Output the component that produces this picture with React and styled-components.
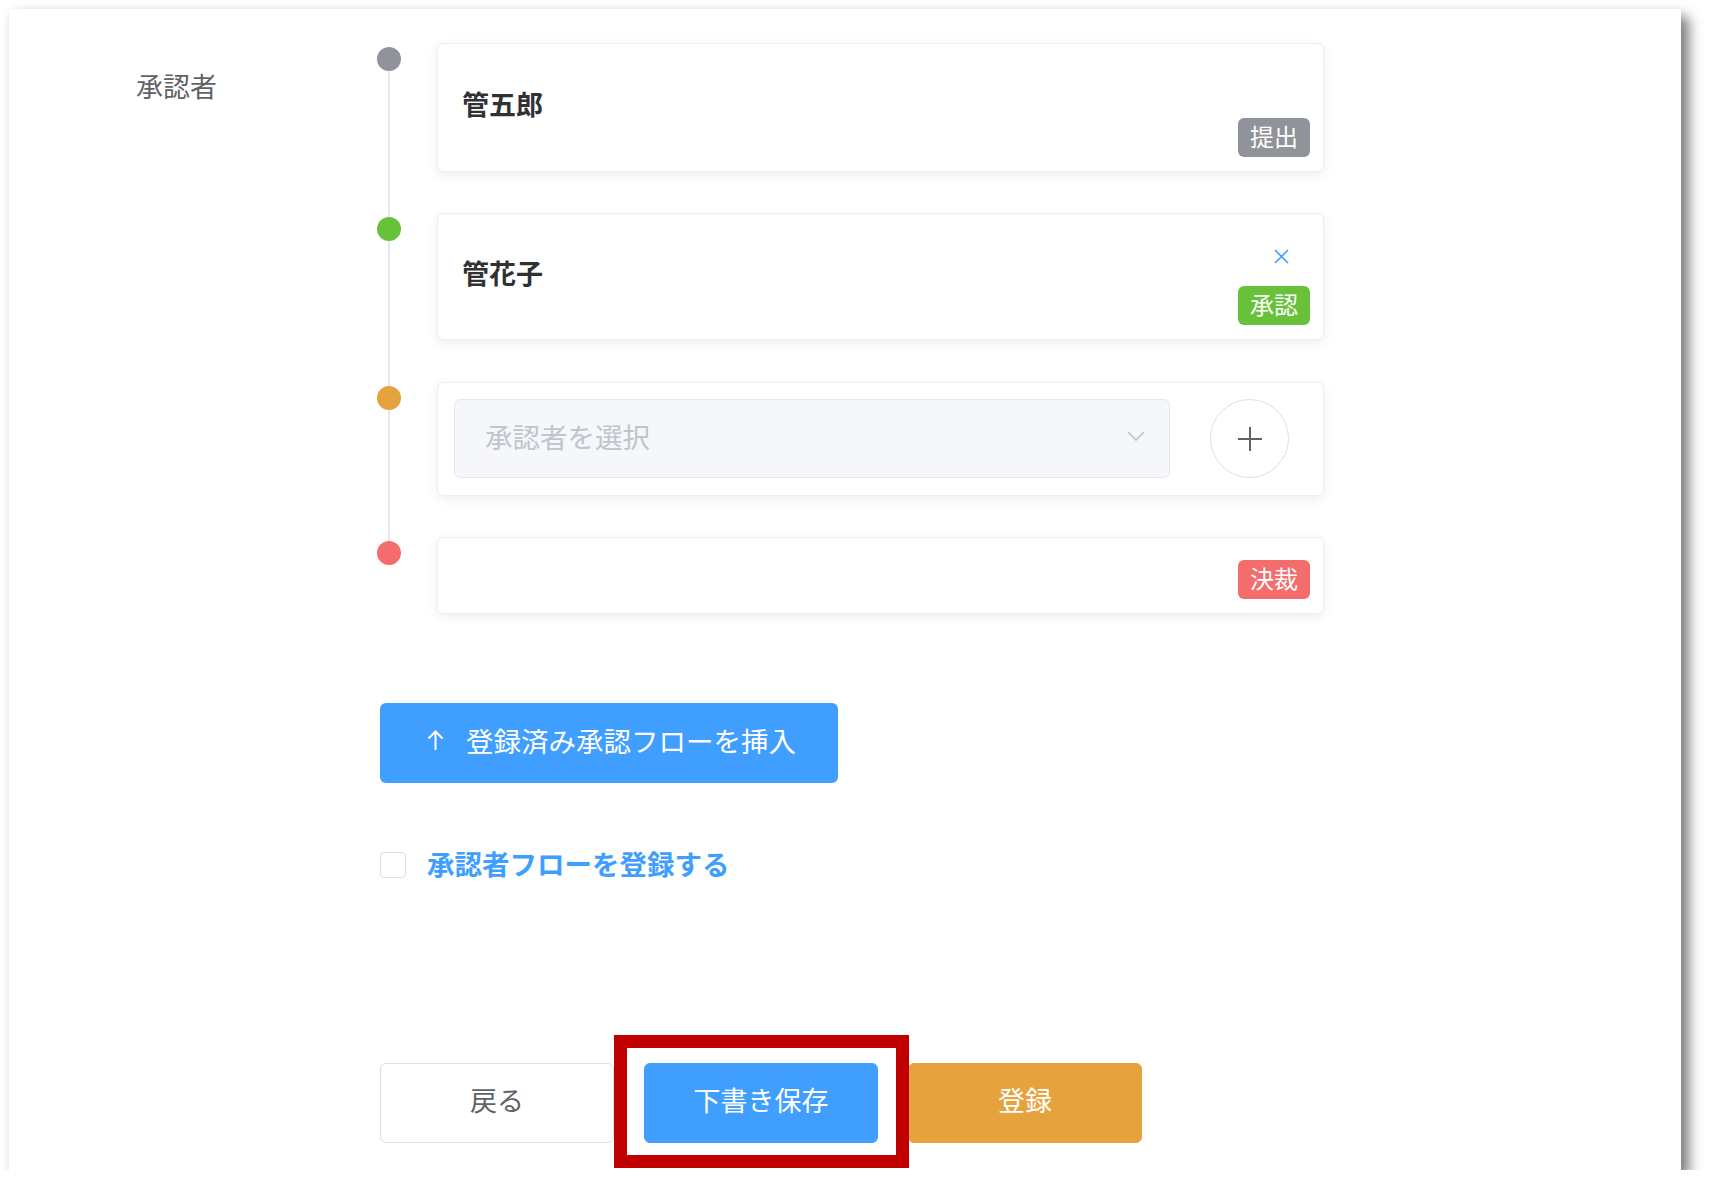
import React from 'react';
import styled, { createGlobalStyle } from 'styled-components';

const GlobalStyle = createGlobalStyle`
  body {
    margin: 0;
    background: #ffffff;
    font-family: "Noto Sans CJK JP", "Noto Sans", sans-serif;
  }
  * {
    box-sizing: border-box;
  }
`;

const Sheet = styled.div`
  margin: 9px 0 0 9px;
  width: 1672px;
  height: 1161px;
  background: #ffffff;
  box-shadow: 0 0 8px rgba(0, 0, 0, 0.06), 8px 8px 12px rgba(0, 0, 0, 0.5);
  padding: 34px 0 27px 127px;
  display: flex;
`;

const FieldLabel = styled.div`
  width: 244px;
  margin-top: 23px;
  font-size: 27px;
  line-height: 40px;
  color: #606266;
`;

const Content = styled.div`
  width: 944px;
  display: flex;
  flex-direction: column;
`;

const Timeline = styled.div`
  display: flex;
  flex-direction: column;
  margin-left: -3px;
`;

const Item = styled.div`
  display: flex;
`;

const DotColumn = styled.div`
  width: 24px;
  margin-right: 36px;
  display: flex;
  flex-direction: column;
  align-items: center;
`;

const Lead = styled.div`
  width: 2px;
  height: 4px;
  background: ${(p) => (p.$hidden ? 'transparent' : '#e4e7ed')};
`;

const Dot = styled.div`
  width: 24px;
  height: 24px;
  border-radius: 50%;
  background: ${(p) => p.$color};
`;

const Tail = styled.div`
  flex: 1;
  width: 2px;
  background: ${(p) => (p.$hidden ? 'transparent' : '#e4e7ed')};
`;

const ItemBody = styled.div`
  flex: 1;
  display: flex;
  padding-bottom: ${(p) => p.$gap}px;
`;

const Card = styled.div`
  flex: 1;
  min-height: ${(p) => p.$height}px;
  background: #ffffff;
  border: 1px solid #ebeef5;
  border-radius: 6px;
  box-shadow: 0 3px 12px rgba(0, 0, 0, 0.07);
  display: flex;
  align-items: center;
  padding: 0 13px 0 24px;
`;

const Name = styled.div`
  flex: 1;
  padding-bottom: 9px;
  font-size: 27px;
  font-weight: 700;
  color: #303133;
`;

const Side = styled.div`
  align-self: stretch;
  margin-left: auto;
  display: flex;
  flex-direction: column;
  justify-content: flex-end;
  align-items: flex-end;
  gap: 21px;
  padding-bottom: 14px;
`;

const Close = styled.button`
  width: 17px;
  height: 17px;
  margin-right: 20px;
  padding: 0;
  border: none;
  background: none;
  display: flex;
  cursor: pointer;
`;

const Tag = styled.span`
  height: 39px;
  padding: 0 12px 3px;
  border-radius: 6px;
  background: ${(p) => p.$color};
  color: #ffffff;
  font-size: 24px;
  line-height: 36px;
`;

const PickerCard = styled(Card)`
  padding: 16px 34px 17px 16px;
  gap: 40px;
`;

const Select = styled.div`
  flex: 1;
  height: 79px;
  background: #f5f7fa;
  border: 1px solid #e4e7ed;
  border-radius: 6px;
  padding: 0 24px 5px 30px;
  display: flex;
  align-items: center;
  justify-content: space-between;
  font-size: 27.5px;
  color: #c0c4cc;
`;

const RoundButton = styled.button`
  width: 79px;
  height: 79px;
  border-radius: 50%;
  border: 1px solid #dcdfe6;
  background: #ffffff;
  padding: 0;
  display: flex;
  align-items: center;
  justify-content: center;
  cursor: pointer;
`;

const InsertButton = styled.button`
  margin-top: 89px;
  width: 458px;
  height: 80px;
  border: none;
  border-radius: 6px;
  background: #409eff;
  color: #ffffff;
  font-family: inherit;
  font-size: 27.5px;
  display: flex;
  align-items: center;
  gap: 22px;
  padding: 0 0 6px 47px;
  cursor: pointer;
`;

const CheckRow = styled.label`
  margin-top: 62px;
  display: flex;
  align-items: center;
  gap: 21px;
  cursor: pointer;
`;

const CheckBox = styled.span`
  width: 26px;
  height: 26px;
  border: 1px solid #dcdfe6;
  border-radius: 4px;
  background: #ffffff;
`;

const CheckText = styled.span`
  font-size: 27.5px;
  font-weight: 700;
  color: #409eff;
  line-height: 36px;
  padding-bottom: 3px;
`;

const Actions = styled.div`
  margin-top: auto;
  display: flex;
  gap: 30px;
`;

const ActionButton = styled.button`
  width: 234px;
  height: 80px;
  padding: 0 0 8px;
  border-radius: 6px;
  border: 1px solid ${(p) => p.$border || p.$bg};
  background: ${(p) => p.$bg};
  color: ${(p) => p.$color};
  font-family: inherit;
  font-size: 27px;
  cursor: pointer;
`;

// red frame drawn over the draft-save button
const Highlight = styled.span`
  position: relative;
  display: inline-flex;

  &::after {
    content: '';
    position: absolute;
    top: -28px;
    left: -30px;
    right: -31px;
    bottom: -25px;
    border: 13px solid #c00000;
    pointer-events: none;
  }
`;

const CloseIcon = () => (
  <svg width="17" height="17" viewBox="0 0 17 17">
    <path d="M2 2 L15 15 M15 2 L2 15" stroke="#409eff" strokeWidth="1.6" fill="none" />
  </svg>
);

const Chevron = () => (
  <svg width="18" height="12" viewBox="0 0 18 12">
    <path d="M1 2 L9 10 L17 2" stroke="#c0c4cc" strokeWidth="1.6" fill="none" />
  </svg>
);

const PlusIcon = () => (
  <svg width="26" height="26" viewBox="0 0 26 26">
    <path d="M13 1 V25 M1 13 H25" stroke="#606266" strokeWidth="2" fill="none" />
  </svg>
);

const ArrowUp = () => (
  <svg width="17" height="21" viewBox="0 0 17 21">
    <path d="M8.5 1.5 V20 M1.5 8.5 L8.5 1.5 L15.5 8.5" stroke="#ffffff" strokeWidth="2" fill="none" />
  </svg>
);

function Step({ color, first, last, gap = 41, children }) {
  return (
    <Item>
      <DotColumn>
        <Lead $hidden={first} />
        <Dot $color={color} />
        <Tail $hidden={last} />
      </DotColumn>
      <ItemBody $gap={last ? 0 : gap}>{children}</ItemBody>
    </Item>
  );
}

export default function App() {
  return (
    <>
      <GlobalStyle />
      <Sheet>
        <FieldLabel>承認者</FieldLabel>
        <Content>
          <Timeline>
            <Step color="#909399" first>
              <Card $height={129}>
                <Name>管五郎</Name>
                <Side>
                  <Tag $color="#909399">提出</Tag>
                </Side>
              </Card>
            </Step>
            <Step color="#67c23a" gap={42}>
              <Card $height={127}>
                <Name>管花子</Name>
                <Side>
                  <Close aria-label="削除">
                    <CloseIcon />
                  </Close>
                  <Tag $color="#67c23a">承認</Tag>
                </Side>
              </Card>
            </Step>
            <Step color="#e6a23c">
              <PickerCard $height={114}>
                <Select>
                  <span>承認者を選択</span>
                  <Chevron />
                </Select>
                <RoundButton aria-label="追加">
                  <PlusIcon />
                </RoundButton>
              </PickerCard>
            </Step>
            <Step color="#f56c6c" last>
              <Card $height={77}>
                <Side>
                  <Tag $color="#f56c6c">決裁</Tag>
                </Side>
              </Card>
            </Step>
          </Timeline>

          <InsertButton>
            <ArrowUp />
            <span>登録済み承認フローを挿入</span>
          </InsertButton>

          <CheckRow>
            <CheckBox />
            <CheckText>承認者フローを登録する</CheckText>
          </CheckRow>

          <Actions>
            <ActionButton $bg="#ffffff" $border="#dcdfe6" $color="#606266">戻る</ActionButton>
            <Highlight>
              <ActionButton $bg="#409eff" $color="#ffffff">下書き保存</ActionButton>
            </Highlight>
            <ActionButton $bg="#e6a23c" $color="#ffffff">登録</ActionButton>
          </Actions>
        </Content>
      </Sheet>
    </>
  );
}
